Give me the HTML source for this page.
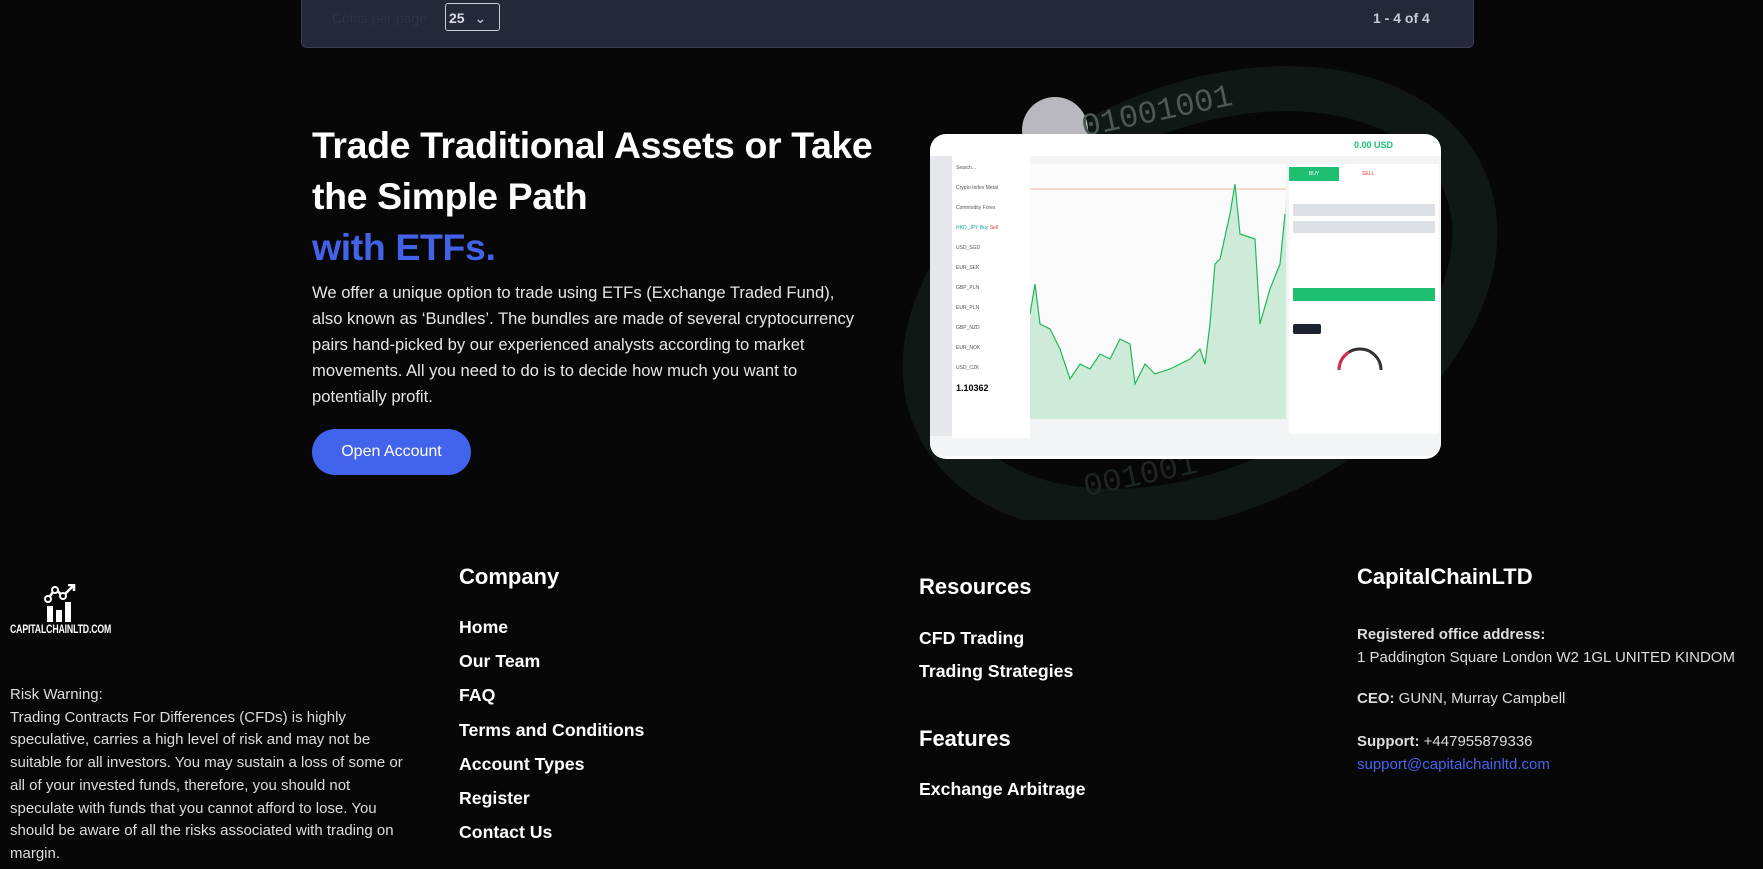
<!DOCTYPE html>
<html><head><meta charset="utf-8"><style>
*{margin:0;padding:0;box-sizing:border-box}
html,body{width:1763px;height:869px;background:#070707;overflow:hidden;font-family:"Liberation Sans",sans-serif;color:#fff}
.abs{position:absolute}
.panel{left:301px;top:-10px;width:1173px;height:58px;background:#242839;border:1px solid #3a3f52;border-radius:0 0 6px 6px}
.h1{left:312px;top:120px;font-size:37.5px;font-weight:bold;line-height:51px;letter-spacing:-0.4px}
.p{left:312px;top:280px;width:548px;font-size:16.6px;line-height:26px;color:#e6e6e6}
.btn{left:312px;top:429px;width:159px;height:46px;border-radius:23px;background:#4263eb;font-size:16px;text-align:center;line-height:46px}
.ft{font-size:15px;color:#ddd;line-height:22.7px}
.l{font-size:17.7px;font-weight:bold;position:absolute}
.hd{font-size:22px;font-weight:bold;position:absolute}
</style></head><body>
<div class="abs panel"></div>
<div class="abs" style="left:332px;top:10px;font-size:14px;color:#2f3345">Coins per page</div>
<div class="abs" style="left:445px;top:3px;width:55px;height:28px;border:1px solid #c8cbd6;border-radius:3px;font-size:14px;font-weight:bold;color:#d8dbe8;padding:6px 0 0 3px">25 <span style="font-weight:normal;margin-left:6px">&#8964;</span></div>
<div class="abs" style="left:1373px;top:10px;font-size:14px;font-weight:bold;color:#c9ccd8">1 - 4 of 4</div>

<div class="abs h1">Trade Traditional Assets or Take<br>the Simple Path<br><span style="color:#4262e9">with ETFs.</span></div>
<div class="abs p">We offer a unique option to trade using ETFs (Exchange Traded Fund), also known as ‘Bundles’. The bundles are made of several cryptocurrency pairs hand-picked by our experienced analysts according to market movements. All you need to do is to decide how much you want to potentially profit.</div>
<div class="abs btn">Open Account</div>

<!-- decorative -->
<svg class="abs" style="left:880px;top:60px" width="620" height="460">
<ellipse cx="320" cy="240" rx="290" ry="190" fill="none" stroke="#0f1814" stroke-width="45" transform="rotate(-25 320 240)"/>
<circle cx="175" cy="70" r="33" fill="#b9b8c0"/>
<text x="200" y="60" font-family="Liberation Mono" font-size="32" fill="#4d5955" transform="rotate(-12 280 50)">01001001</text>
<text x="200" y="420" font-family="Liberation Mono" font-size="32" fill="#1e2623" transform="rotate(-12 280 400)">001001</text>
</svg>
<!-- trading image -->
<div class="abs" style="left:930px;top:134px;width:511px;height:325px;background:#fff;border-radius:16px;overflow:hidden">
 <div class="abs" style="left:0;top:22px;width:511px;height:300px;background:#f3f4f6"></div>
 <div class="abs" style="left:136px;top:4px;font-size:9px">⊙</div>
 <div class="abs" style="left:424px;top:6px;font-size:9px;color:#1fbf72;font-weight:bold">0.00 USD</div>
 <div class="abs" style="left:0;top:22px;width:22px;height:280px;background:#e6e8eb"></div>
 <div class="abs" style="left:22px;top:22px;width:78px;height:282px;background:#fff;font-size:5px;color:#555;line-height:20px;padding:2px 4px">
  Search...<br>Crypto Index Metal<br>Commodity Forex<br>
  <span style="color:#1a9">HKD_JPY Buy</span> <span style="color:#d33">Sell</span><br>USD_SGD<br>EUR_SEK<br>GBP_PLN<br>EUR_PLN<br>GBP_NZD<br>EUR_NOK<br>USD_CZK<br><b style="font-size:9px;color:#000">1.10362</b></div>
 <svg class="abs" style="left:100px;top:30px" width="256" height="255">
  <rect width="256" height="255" fill="#fafbfa"/>
  <line x1="0" y1="25" x2="256" y2="25" stroke="#f0a080" stroke-width="0.7"/>
  <path d="M0 150 L5 120 L10 160 L20 165 L30 185 L40 215 L50 200 L60 205 L70 190 L80 195 L90 175 L100 180 L105 220 L115 200 L125 210 L140 205 L160 195 L170 185 L175 200 L180 160 L185 100 L190 95 L200 50 L205 20 L210 70 L225 75 L230 160 L240 125 L250 100 L255 50 L256 30 L256 255 L0 255 Z" fill="#cdebd8"/>
  <path d="M0 150 L5 120 L10 160 L20 165 L30 185 L40 215 L50 200 L60 205 L70 190 L80 195 L90 175 L100 180 L105 220 L115 200 L125 210 L140 205 L160 195 L170 185 L175 200 L180 160 L185 100 L190 95 L200 50 L205 20 L210 70 L225 75 L230 160 L240 125 L250 100 L255 50" fill="none" stroke="#20b85a" stroke-width="1.2"/>
 </svg>
 <div class="abs" style="left:359px;top:30px;width:150px;height:270px;background:#fff"></div>
 <div class="abs" style="left:359px;top:33px;width:50px;height:14px;background:#1fbf72;font-size:5px;color:#fff;text-align:center;line-height:14px">BUY</div>
 <div class="abs" style="left:432px;top:33px;font-size:5px;color:#d33;line-height:14px">SELL</div>
 <div class="abs" style="left:363px;top:70px;width:142px;height:12px;background:#dde0e4"></div>
 <div class="abs" style="left:363px;top:87px;width:142px;height:12px;background:#dde0e4"></div>
 <div class="abs" style="left:363px;top:154px;width:142px;height:13px;background:#1fbf72"></div>
 <div class="abs" style="left:363px;top:190px;width:28px;height:10px;background:#1d2230;border-radius:2px"></div>
 <svg class="abs" style="left:405px;top:210px" width="50" height="30"><path d="M4 26 A21 21 0 0 1 46 26" fill="none" stroke="#333" stroke-width="3"/><path d="M4 26 A21 21 0 0 1 14 8" fill="none" stroke="#d03050" stroke-width="3"/></svg>
</div>

<!-- footer -->
<svg class="abs" style="left:43px;top:584px" width="34" height="38" viewBox="0 0 34 38">
 <rect x="4" y="22" width="6" height="16" fill="#fff"/><rect x="13" y="26" width="6" height="12" fill="#fff"/><rect x="22" y="18" width="6" height="20" fill="#fff"/>
 <path d="M5 15 L12 5 L20 12 L31 1" stroke="#fff" stroke-width="2.5" fill="none"/><path d="M25 1 L31 1 L31 7" stroke="#fff" stroke-width="2.5" fill="none"/>
 <circle cx="5" cy="15" r="3" fill="#070707" stroke="#fff" stroke-width="2"/><circle cx="12" cy="6" r="3" fill="#070707" stroke="#fff" stroke-width="2"/><circle cx="20" cy="12" r="3" fill="#070707" stroke="#fff" stroke-width="2"/>
</svg>
<div class="abs" style="left:10px;top:624px;font-size:11.5px;font-weight:bold;transform:scaleX(0.76);transform-origin:left;letter-spacing:-0.2px">CAPITALCHAINLTD.COM</div>
<div class="abs ft" style="left:10px;top:684px;width:400px">Risk Warning:<br>Trading Contracts For Differences (CFDs) is highly speculative, carries a high level of risk and may not be suitable for all investors. You may sustain a loss of some or all of your invested funds, therefore, you should not speculate with funds that you cannot afford to lose. You should be aware of all the risks associated with trading on margin.</div>

<div class="hd" style="left:459px;top:564px">Company</div>
<div class="l" style="left:459px;top:617px">Home</div>
<div class="l" style="left:459px;top:651px">Our Team</div>
<div class="l" style="left:459px;top:685px">FAQ</div>
<div class="l" style="left:459px;top:720px">Terms and Conditions</div>
<div class="l" style="left:459px;top:754px">Account Types</div>
<div class="l" style="left:459px;top:788px">Register</div>
<div class="l" style="left:459px;top:822px">Contact Us</div>

<div class="hd" style="left:919px;top:574px">Resources</div>
<div class="l" style="left:919px;top:628px">CFD Trading</div>
<div class="l" style="left:919px;top:661px">Trading Strategies</div>
<div class="hd" style="left:919px;top:726px">Features</div>
<div class="l" style="left:919px;top:779px">Exchange Arbitrage</div>

<div class="hd" style="left:1357px;top:564px">CapitalChainLTD</div>
<div class="abs ft" style="left:1357px;top:624px"><b>Registered office address:</b><br>1 Paddington Square London W2 1GL UNITED KINDOM</div>
<div class="abs ft" style="left:1357px;top:688px"><b>CEO:</b> GUNN, Murray Campbell</div>
<div class="abs ft" style="left:1357px;top:731px"><b>Support:</b> +447955879336<br><span style="color:#4a63f0">support@capitalchainltd.com</span></div>
</body></html>
